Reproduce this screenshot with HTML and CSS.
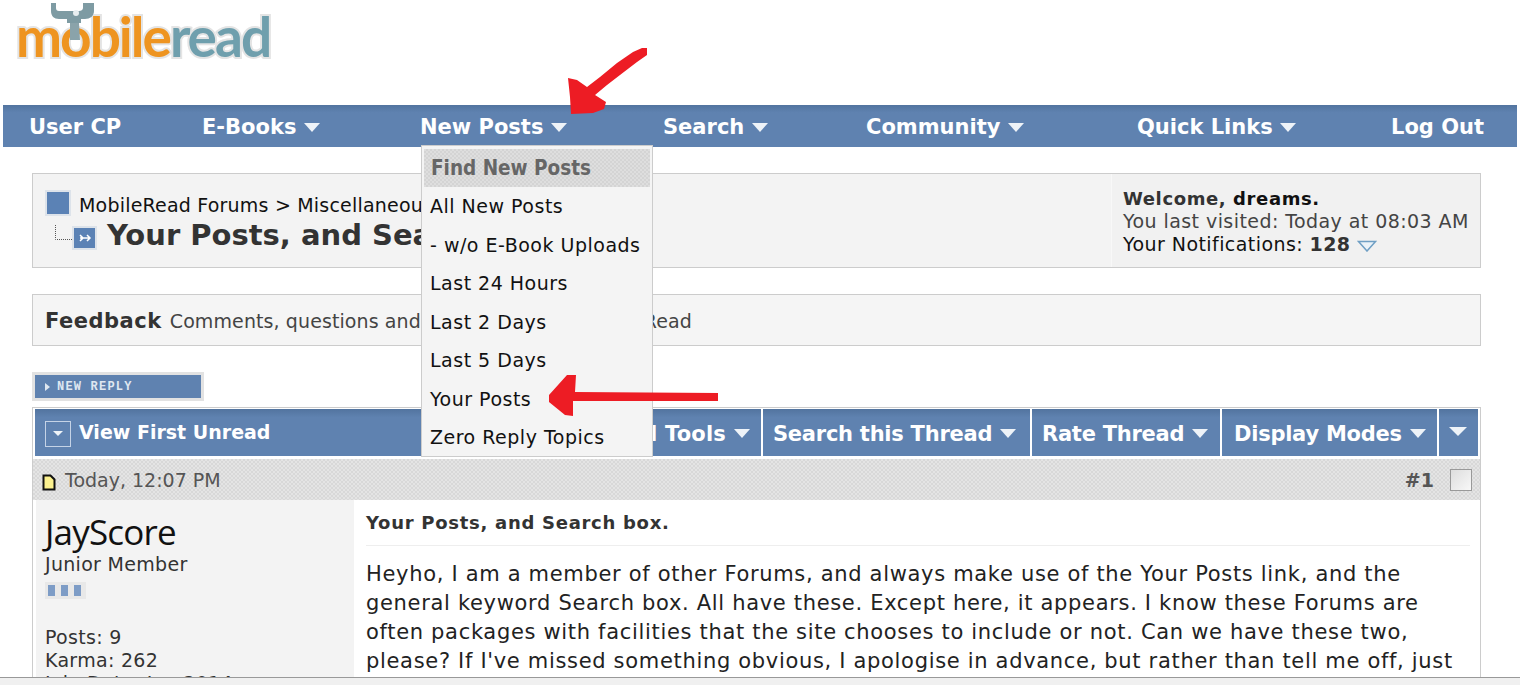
FILE: index.html
```html
<!DOCTYPE html>
<html lang="en">
<head>
    <meta charset="UTF-8">
    <title>Your Posts, and Search box. - MobileRead Forums</title>
    <link rel="stylesheet" href="styles.css">
</head>
<body>
    <div class="logo-row">
        <svg class="logo" width="280" height="74" viewBox="0 0 280 74">
            <text class="logo-text" x="16" y="57"><tspan fill="#ee9420">mobile</tspan><tspan fill="#6f9fad">read</tspan></text>
            <path d="M51 3h5v5c0 2 1 3 3 3h20c2 0 4-1 4-3V3h11v8c0 5-4 8-9 8H81v4h-14v-4h-8c-5 0-8-3-8-8z" fill="#7e9ba3"/>
            <circle cx="76" cy="13" r="3" fill="#e8eef0"/>
            <path d="M70 23h9l1 17h-10z" fill="#8aa3aa"/>
        </svg>
    </div>

    <nav class="navbar">
        <a class="nav-item">User CP</a>
        <a class="nav-item">E-Books <span class="caret"></span></a>
        <a class="nav-item">New Posts <span class="caret"></span></a>
        <a class="nav-item">Search <span class="caret"></span></a>
        <a class="nav-item">Community <span class="caret"></span></a>
        <a class="nav-item">Quick Links <span class="caret"></span></a>
        <a class="nav-item">Log Out</a>
    </nav>

    <div class="content">
        <div class="crumb-box">
            <div class="crumb-main">
                <div class="crumb-line"><span class="forum-icon"></span>MobileRead Forums &gt; Miscellaneous</div>
                <div class="title-line">
                    <svg class="tree-icon" width="52" height="28" viewBox="0 0 52 28">
                        <path d="M10.500 3v14.500H27" fill="none" stroke="#555" stroke-dasharray="1 1"/>
                        <rect x="28" y="5" width="23" height="22" fill="#5b82b5" stroke="#dde3ea" stroke-width="2"/>
                        <path d="M35 16h10M42 13l3 3-3 3M35 13l3 3-3 3" fill="none" stroke="#fff" stroke-width="1.500"/>
                    </svg>
                    <h1 class="thread-title">Your Posts, and Search box.</h1>
                </div>
            </div>
            <div class="welcome">
                <strong class="welcome-head">Welcome, <b>dreams.</b></strong>
                <div class="last-visit">You last visited: Today at 08:03 AM</div>
                <div class="notif">Your Notifications: <b>128</b>
                    <svg class="notif-icon" width="20" height="12" viewBox="0 0 20 12"><path d="M1.500 1.500h17L10 11z" fill="#eaf2f8" stroke="#6f9fc4" stroke-width="1.500"/></svg>
                </div>
            </div>
        </div>

        <div class="feedback-box"><b>Feedback</b> Comments, questions and suggestions for MobileRead</div>

        <a class="reply-btn"><span class="reply-tri"></span>NEW REPLY</a>

        <div class="thread-bar">
            <div class="bar-cell first-cell">
                <span class="box-icon"><span class="small-caret"></span></span>
                <span class="first-unread">View First Unread</span>
                <span class="tools-link">Thread Tools <span class="caret"></span></span>
            </div>
            <div class="bar-cell search-cell">Search this Thread <span class="caret"></span></div>
            <div class="bar-cell rate-cell">Rate Thread <span class="caret"></span></div>
            <div class="bar-cell modes-cell">Display Modes <span class="caret"></span></div>
            <div class="bar-cell end-cell"><span class="caret end-caret"></span></div>
        </div>

        <div class="post">
            <div class="post-head">
                <div class="post-date">
                    <svg class="doc-icon" width="14" height="18" viewBox="0 0 14 18"><path d="M1.500 2.500h7l4 4v10h-11z" fill="#fbf18f" stroke="#111" stroke-width="2"/></svg>
                    Today, 12:07 PM
                </div>
                <div class="post-num"><b>#1</b><span class="check"></span></div>
            </div>
            <div class="post-body">
                <div class="user-col">
                    <div class="username">JayScore</div>
                    <div class="user-rank">Junior Member</div>
                    <div class="pips"><i></i><i></i><i></i></div>
                    <div class="user-info">Posts: 9<br>Karma: 262<br>Join Date: Jan 2014</div>
                </div>
                <div class="msg-col">
                    <div class="msg-title">Your Posts, and Search box.</div>
                    <div class="msg-text">Heyho, I am a member of other Forums, and always make use of the Your Posts link, and the<br>general keyword Search box. All have these. Except here, it appears. I know these Forums are<br>often packages with facilities that the site chooses to include or not. Can we have these two,<br>please? If I've missed something obvious, I apologise in advance, but rather than tell me off, just</div>
                </div>
            </div>
        </div>
    </div>

    <div class="menu">
        <div class="menu-head">Find New Posts</div>
        <a class="menu-item">All New Posts</a>
        <a class="menu-item">- w/o E-Book Uploads</a>
        <a class="menu-item">Last 24 Hours</a>
        <a class="menu-item">Last 2 Days</a>
        <a class="menu-item">Last 5 Days</a>
        <a class="menu-item">Your Posts</a>
        <a class="menu-item">Zero Reply Topics</a>
    </div>

    <svg class="arrow-down" width="90" height="72" viewBox="0 0 90 72">
        <path d="M8 33l9 2 10 7 13-10 17-14 16-11 9-4h5v7l-10 7-17 13-13 10-12 10 11 7-2 7-11 4-22 1-1-17z" fill="#ed1c24"/>
    </svg>
    <svg class="arrow-left" width="172" height="44" viewBox="0 0 172 44">
        <path d="M170 18v8H25v15l-8-1L1 27v-7L19 0h9l-1 17z" fill="#ed1c24"/>
    </svg>

    <div class="bottom-strip"></div>
</body>
</html>
```

FILE: styles.css
```css
html, body {
    margin: 0;
    padding: 0;
    height: 685px;
    overflow: hidden;
}

body {
    position: relative;
    background-color: white;
    font-family: "DejaVu Sans", Verdana, sans-serif;
    font-size: 19px;
    color: #111;
}

.logo-row {
    height: 105px;
}

.logo {
    display: block;
}

.logo-text {
    font-family: Lato, sans-serif;
    font-size: 55px;
    font-weight: bold;
    letter-spacing: -2px;
    stroke: #e4e4e4;
    stroke-width: 4;
    paint-order: stroke;
}

.navbar {
    display: grid;
    grid-template-columns: 173px 218px 243px 203px 271px 254px auto;
    align-items: center;
    box-sizing: border-box;
    height: 42px;
    margin: 0 3px;
    padding: 1px 0 0 26px;
    background: linear-gradient(#52749f, #5f82b0 18%, #5f82b0);
    color: white;
    font-size: 21px;
    font-weight: bold;
}

.caret {
    display: inline-block;
    width: 0;
    height: 0;
    vertical-align: 2px;
    border-left: 8px solid transparent;
    border-right: 8px solid transparent;
    border-top: 9px solid #eef3f8;
}

.content {
    margin: 26px 39px 0 32px;
}

.crumb-box {
    display: flex;
    box-sizing: border-box;
    height: 95px;
    background-color: #f3f3f3;
    border: 1px solid #ccc;
}

.crumb-main {
    flex: 1;
    padding: 14px 12px 0;
}

.crumb-line {
    display: flex;
    align-items: flex-end;
    gap: 8px;
    height: 28px;
    font-size: 19px;
    letter-spacing: 0.2px;
}

.forum-icon {
    display: block;
    box-sizing: border-box;
    width: 26px;
    height: 26px;
    background-color: #5b82b5;
    border: 2px solid #dde3ea;
}

.title-line {
    display: flex;
    align-items: center;
    gap: 10px;
    margin-top: 1px;
}

.tree-icon {
    flex: none;
    margin-top: 2px;
}

.thread-title {
    margin: 0;
    font-size: 29px;
    line-height: 36px;
    color: #333;
}

.welcome {
    width: 369px;
    box-sizing: border-box;
    padding: 13px 0 0 11px;
    background-color: #f1f1f1;
    border-left: 1px solid #f8f8f8;
    font-size: 19px;
    line-height: 23px;
    letter-spacing: 0.43px;
}

.welcome-head {
    display: block;
    font-size: 18px;
    letter-spacing: 0.6px;
    color: #333;
}

.welcome-head b {
    color: #111;
}

.last-visit {
    color: #444;
}

.notif b {
    color: #333;
}

.notif-icon {
    vertical-align: -1px;
}

.feedback-box {
    box-sizing: border-box;
    height: 52px;
    margin-top: 26px;
    padding: 14px 12px 0;
    background-color: #f5f5f5;
    border: 1px solid #ccc;
    font-size: 19px;
    letter-spacing: 0.1px;
    color: #444;
}

.feedback-box b {
    margin-right: 2px;
    font-size: 21px;
    letter-spacing: 0.5px;
    color: #333;
}

.reply-btn {
    display: flex;
    align-items: center;
    gap: 7px;
    box-sizing: border-box;
    width: 172px;
    height: 29px;
    margin-top: 26px;
    padding-left: 10px;
    background-color: #5f82b0;
    border: 3px solid #e2e2e2;
    color: #dfe7f0;
    font-family: "Liberation Mono", monospace;
    font-size: 12px;
    font-weight: bold;
    letter-spacing: 1.2px;
}

.reply-tri {
    width: 0;
    height: 0;
    border-top: 4px solid transparent;
    border-bottom: 4px solid transparent;
    border-left: 5px solid #dfe7f0;
}

.thread-bar {
    display: flex;
    gap: 2px;
    box-sizing: border-box;
    height: 50px;
    margin-top: 6px;
    padding: 1px 2px 0;
    background-color: white;
    border: 1px solid #ccc;
    border-bottom-width: 0;
    color: white;
    font-size: 21px;
    font-weight: bold;
    letter-spacing: -0.25px;
}

.bar-cell {
    display: flex;
    align-items: center;
    gap: 8px;
    height: 47px;
    box-sizing: border-box;
    padding: 2px 0 0 10px;
    background: linear-gradient(#52749f, #5f82b0 18%, #5f82b0);
}

.first-cell {
    flex: none;
    width: 726px;
    padding-right: 11px;
}

.first-unread {
    margin-bottom: 4px;
    font-size: 19px;
    letter-spacing: 0;
}

.tools-link {
    display: flex;
    align-items: center;
    gap: 8px;
    margin-left: auto;
    letter-spacing: 0.2px;
}

.box-icon {
    display: flex;
    align-items: center;
    justify-content: center;
    box-sizing: border-box;
    width: 26px;
    height: 26px;
    border: 1px solid #c5d3e6;
}

.small-caret {
    width: 0;
    height: 0;
    border-left: 5px solid transparent;
    border-right: 5px solid transparent;
    border-top: 5px solid #eef3f8;
}

.search-cell {
    width: 267px;
}

.rate-cell {
    width: 188px;
}

.modes-cell {
    width: 215px;
    padding-left: 12px;
}

.end-cell {
    flex: 1;
}

.end-caret {
    margin-bottom: 4px;
    border-left-width: 9px;
    border-right-width: 9px;
}

.post {
    border: 1px solid #ccc;
    border-top-width: 0;
}

.post-head {
    display: flex;
    justify-content: space-between;
    align-items: center;
    height: 41px;
    padding: 0 8px 0 9px;
    border-top: 2px solid white;
    background-color: #e0e0e0;
    background-image: conic-gradient(#d8d8d8 25%, #e4e4e4 0 50%, #d8d8d8 0 75%, #e4e4e4 0);
    background-size: 4px 4px;
    color: #555;
}

.post-date {
    display: flex;
    align-items: center;
    gap: 9px;
    font-size: 19px;
}

.doc-icon {
    margin-top: 5px;
}

.post-num {
    display: flex;
    align-items: center;
    gap: 16px;
    font-size: 19px;
}

.check {
    display: block;
    box-sizing: border-box;
    width: 22px;
    height: 22px;
    background: linear-gradient(135deg, #ddd, #f8f8f8);
    border: 1px solid #999;
}

.post-body {
    display: flex;
    gap: 2px;
    padding-left: 3px;
}

.user-col {
    flex: none;
    width: 318px;
    height: 180px;
    box-sizing: border-box;
    padding: 11px 0 0 9px;
    background-color: #f3f3f3;
    color: #333;
    letter-spacing: 0.3px;
}

.username {
    font-family: "Open Sans", sans-serif;
    font-size: 35px;
    line-height: 42px;
    letter-spacing: -0.8px;
    color: #111;
}

.user-rank {
    line-height: 22px;
}

.pips {
    display: flex;
    gap: 6px;
    box-sizing: border-box;
    width: 41px;
    height: 17px;
    margin-top: 7px;
    padding: 3px;
    background-color: #e8e8e8;
}

.pips i {
    width: 7px;
    height: 11px;
    background-color: #7d9cc6;
}

.user-info {
    margin-top: 27px;
    line-height: 23px;
}

.msg-col {
    flex: 1;
    padding: 12px 10px 0;
}

.msg-title {
    padding-bottom: 12px;
    border-bottom: 1px solid #eee;
    font-size: 18px;
    font-weight: bold;
    letter-spacing: 0.72px;
    color: #333;
}

.msg-text {
    margin-top: 14px;
    font-size: 21px;
    line-height: 29px;
    letter-spacing: 0.68px;
    white-space: nowrap;
    color: #222;
}

.menu {
    position: absolute;
    left: 421px;
    top: 145px;
    width: 232px;
    height: 312px;
    box-sizing: border-box;
    padding: 3px 2px 0;
    background-color: #f4f4f4;
    border: 1px solid #ccc;
    letter-spacing: 0.5px;
}

.menu-head {
    height: 38px;
    line-height: 38px;
    padding-left: 7px;
    background-color: #d8d8d8;
    background-image: conic-gradient(#d4d4d4 25%, #dedede 0 50%, #d4d4d4 0 75%, #dedede 0);
    background-size: 4px 4px;
    font-family: "DejaVu Sans Condensed", "DejaVu Sans", sans-serif;
    font-size: 20.5px;
    font-weight: bold;
    letter-spacing: 0;
    color: #666;
}

.menu-item {
    display: block;
    height: 38.5px;
    line-height: 38.5px;
    padding-left: 6px;
}

.arrow-down {
    position: absolute;
    left: 560px;
    top: 45px;
}

.arrow-left {
    position: absolute;
    left: 548px;
    top: 375px;
}

.bottom-strip {
    position: absolute;
    left: 0;
    right: 0;
    bottom: 0;
    height: 7px;
    background-color: #f0f0f0;
    border-top: 1px solid #999;
}
```
